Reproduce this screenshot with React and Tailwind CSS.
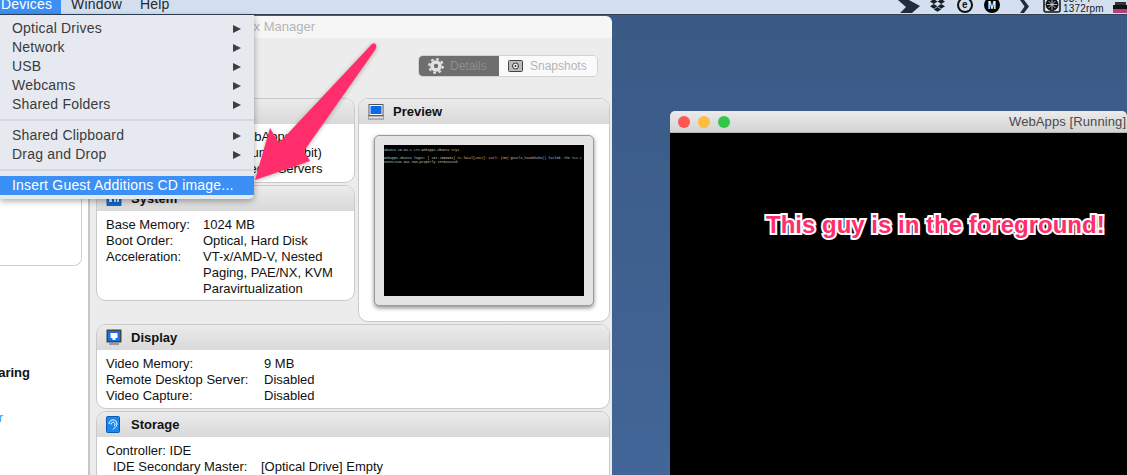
import { FaDropbox } from "react-icons/fa";

const FONT = "font-['Liberation_Sans',Arial,sans-serif]";

const menuGroups = [
  ["Optical Drives", "Network", "USB", "Webcams", "Shared Folders"],
  ["Shared Clipboard", "Drag and Drop"],
];

function MenuRow({ label }) {
  return (
    <div className="h-[19px] pl-3 pr-[13px] flex items-center justify-between text-[14px] tracking-[0.2px] text-[#3a3a3c]">
      <span>{label}</span>
      <span className="w-0 h-0 border-y-[4.5px] border-y-transparent border-l-[8px] border-l-[#3f3f42]" />
    </div>
  );
}

function DevicesMenu() {
  return (
    <div className="absolute top-[15px] left-0 w-[254px] h-[184px] pt-1 bg-[#e6eaf0] rounded-br-[5px] shadow-[0_2px_6px_rgba(0,0,0,0.35)] z-10">
      {menuGroups[0].map((m) => <MenuRow key={m} label={m} />)}
      <div className="h-[2px] bg-[#d5d8de] mt-[5px] mb-[5px]" />
      {menuGroups[1].map((m) => <MenuRow key={m} label={m} />)}
      <div className="h-[2px] bg-[#d5d8de] mt-[5px] mb-[5px]" />
      <div className="h-[19px] pl-3 flex items-center bg-[#3b8ff5] text-white text-[14px] tracking-[0.2px]">
        Insert Guest Additions CD image...
      </div>
    </div>
  );
}

function StatusIcons() {
  return (
    <div className="absolute left-0 top-0 w-full h-[15px] pointer-events-none">
      <div className="flex items-end h-[13px] pl-[898px] text-[#17202c]">
        <svg width="22" height="13" viewBox="0 0 22 13" className="shrink-0" fill="#1f2d3d">
          <path d="M0 0H11L22 6L14 13H2L8 7Z" />
        </svg>
        <FaDropbox className="ml-[10px] w-[15px] h-[15px] shrink-0" />
        <div className="ml-3 w-4 h-4 rounded-full bg-[#111] shrink-0 flex items-center justify-center">
          <span className="w-3 h-3 rounded-full bg-[#d3dfee] text-[10px] leading-3 text-center text-[#111] font-bold">e</span>
        </div>
        <div className="ml-[11px] w-4 h-4 rounded-full bg-black shrink-0 flex items-center justify-center text-white text-[10px] font-bold">M</div>
        <svg width="9" height="13" viewBox="0 0 9 13" className="ml-[20px] shrink-0" fill="#1f2d3d">
          <path d="M0 0h4l5 6.5L4 13H0l4.500-6.500z" />
        </svg>
        <svg width="18" height="17" viewBox="0 0 18 17" className="ml-[14px] shrink-0" fill="none" stroke="#111">
          <rect x="1" y="1" width="16" height="15" rx="2" strokeWidth="1.500" />
          <circle cx="9" cy="8.500" r="6" fill="#111" />
          <path d="M9 3v11M4 8.500h10M5.500 5l7 7M12.500 5l-7 7" stroke="#d3dfee" strokeWidth="0.800" />
        </svg>
        <div className="ml-[2px] w-[44px] shrink-0 text-[10px] leading-[10px] text-[#17202c] -mb-px">
          <div className="text-center pr-4">93.4°F</div>
          <div>1372rpm</div>
        </div>
        <svg width="15" height="11" viewBox="0 0 15 11" className="ml-[6px] shrink-0">
          <rect x="2" y="0" width="11" height="3" fill="#333" />
          <rect x="0" y="3" width="15" height="4" fill="#111" />
          <rect x="0" y="7" width="15" height="4" fill="#b0407e" />
        </svg>
      </div>
    </div>
  );
}

function MenuBar() {
  return (
    <div className="relative h-[15px] shrink-0 bg-[#d3dfee] border-b border-[#2f4258] text-[14px] leading-[15px] tracking-[0.2px] text-[#26282c] overflow-hidden">
      <div className="flex -mt-[3px]">
        <span className="w-[61px] h-[18px] pl-[1px] bg-[#3b8ff5] text-white">Devices</span>
        <span className="ml-[10px]">Window</span>
        <span className="ml-[18px]">Help</span>
      </div>
      <StatusIcons />
    </div>
  );
}

function MonitorIcon() {
  return (
    <svg width="16" height="16" viewBox="0 0 16 16">
      <rect x="1" y="0.500" width="14" height="11" fill="#fff" stroke="#555" />
      <rect x="2.500" y="2" width="11" height="8" fill="#0a6be8" />
      <path d="M0 12h16v3H0z" fill="#e4e4e4" stroke="#666" strokeWidth="0.800" />
    </svg>
  );
}

function DisplayIcon() {
  return (
    <svg width="16" height="17" viewBox="0 0 16 17">
      <rect x="0.500" y="0.500" width="15" height="13" fill="#444" />
      <rect x="2" y="2" width="12" height="10" fill="#1572e8" />
      <rect x="4.500" y="4" width="7" height="5" fill="#fff" />
      <rect x="6.500" y="9" width="3" height="2" fill="#fff" />
      <rect x="3" y="14" width="10" height="2" fill="#999" />
    </svg>
  );
}

function StorageIcon() {
  return (
    <svg width="14" height="17" viewBox="0 0 14 17" fill="none">
      <rect x="0.500" y="0.500" width="13" height="16" rx="1" fill="#1c86ee" stroke="#0b5cb0" />
      <path d="M3 8a4 4 0 1 1 7 2.500L7 13.500M5 8.500a2 2 0 1 1 3 1.500" stroke="#fff" />
    </svg>
  );
}

function ChipIcon() {
  return (
    <svg width="16" height="16" viewBox="0 0 16 16">
      <rect x="0.500" y="1" width="15" height="14" fill="#1464c8" />
      <path d="M3 5h3v6H3zM8 8h2v3H8zM11 6h2v5h-2z" fill="#dbe9fb" />
    </svg>
  );
}

function Row({ label, value, col }) {
  return (
    <div className="flex h-4 leading-4 whitespace-nowrap">
      <span className={col}>{label}</span>
      <span>{value}</span>
    </div>
  );
}

function Card({ icon, title, className, children }) {
  return (
    <div className={`border border-[#c9c9c9] rounded-[10px] bg-white overflow-hidden text-[13px] text-[#111] ${className}`}>
      <div className="h-[25px] flex items-center pl-[9px] gap-[9px] bg-gradient-to-b from-[#ebebeb] to-[#d9d9d9]">
        <span className="w-4 shrink-0 flex items-center">{icon}</span>
        <span className="font-bold">{title}</span>
      </div>
      {children}
    </div>
  );
}

function Toolbar() {
  return (
    <div className="flex justify-end pt-[17px] pr-[14px] text-[12px]">
      <div className="flex h-[22px] w-[180px] rounded-[5px] overflow-hidden border border-[#d2d2d2]">
        <div className="w-[81px] -m-px bg-[#6e6e6e] flex items-center pl-[10px] gap-[6px] text-[#8d8d8d]">
          <svg width="16" height="16" viewBox="0 0 16 16" className="shrink-0">
            <circle cx="8" cy="8" r="4" fill="none" stroke="#e2e2e2" strokeWidth="3.600" />
            <circle cx="8" cy="8" r="6.800" fill="none" stroke="#e2e2e2" strokeWidth="2.200" strokeDasharray="2.700 2.640" />
          </svg>
          <span>Details</span>
        </div>
        <div className="flex-1 ml-px bg-[#fafafa] flex items-center pl-[9px] gap-[7px] text-[#b4b4b8]">
          <svg width="15" height="12" viewBox="0 0 15 12" className="shrink-0">
            <rect x="0.500" y="0.500" width="14" height="11" rx="1" fill="#bbb" stroke="#444" />
            <circle cx="7.500" cy="6" r="3" fill="#eee" stroke="#333" />
            <circle cx="7.500" cy="6" r="1" fill="#333" />
          </svg>
          <span>Snapshots</span>
        </div>
      </div>
    </div>
  );
}

function PreviewBody() {
  return (
    <div className="pt-[11px] pl-[15px]">
      <div className="w-[220px] h-[171px] p-[9px] bg-[#e4e4e4] rounded-[5px] border border-[#9a9a9a] shadow-[0_2px_4px_rgba(0,0,0,0.45)]">
        <div className="h-full bg-black text-[3.300px] leading-[4px] text-[#c4c4c4] font-['Liberation_Mono',monospace] pt-[3px] overflow-hidden">
          <div className="whitespace-nowrap">Ubuntu 16.04.1 LTS webapps-ubuntu tty1</div>
          <div className="mt-[4px] whitespace-nowrap">webapps-ubuntu login: [ 157.2890981] rc-local[2327]: curl: (35) gnutls_handshake() failed: The TLS c</div>
          <div className="whitespace-nowrap">onnection was non-properly terminated.</div>
        </div>
      </div>
    </div>
  );
}

function DetailsPane() {
  return (
    <div className="flex-1 bg-[#ececec]">
      <Toolbar />
      <div className="pl-[6px] mt-[21px] flex flex-col gap-[2px]">
        <div className="flex gap-[3px]">
          <div className="w-[259px] flex flex-col gap-[2px]">
            <Card icon={<MonitorIcon />} title="General" className="h-[85px]">
              <div className="pt-[5px] pl-[9px]">
                <Row col="w-[129px]" label="Name:" value="WebApps" />
                <Row col="w-[129px]" label="Operating System:" value="Ubuntu (64-bit)" />
                <Row col="w-[129px]" label="Groups:" value="/Media Servers" />
              </div>
            </Card>
            <Card icon={<ChipIcon />} title="System" className="h-[116px]">
              <div className="pt-[6px] pl-[9px]">
                <Row col="w-[97px]" label="Base Memory:" value="1024 MB" />
                <Row col="w-[97px]" label="Boot Order:" value="Optical, Hard Disk" />
                <Row col="w-[97px]" label="Acceleration:" value="VT-x/AMD-V, Nested" />
                <Row col="w-[97px]" value="Paging, PAE/NX, KVM" />
                <Row col="w-[97px]" value="Paravirtualization" />
              </div>
            </Card>
          </div>
          <Card icon={<MonitorIcon />} title="Preview" className="w-[252px] h-[224px]">
            <PreviewBody />
          </Card>
        </div>
        <Card icon={<DisplayIcon />} title="Display" className="w-[514px] h-[85px]">
          <div className="pt-[6px] pl-[9px]">
            <Row col="w-[158px]" label="Video Memory:" value="9 MB" />
            <Row col="w-[158px]" label="Remote Desktop Server:" value="Disabled" />
            <Row col="w-[158px]" label="Video Capture:" value="Disabled" />
          </div>
        </Card>
        <Card icon={<StorageIcon />} title="Storage" className="w-[514px] h-[90px] rounded-b-none">
          <div className="pt-[6px] pl-[9px]">
            <Row label="Controller: IDE" />
            <Row col="w-[155px] pl-[7px]" label="IDE Secondary Master:" value="[Optical Drive] Empty" />
          </div>
        </Card>
      </div>
    </div>
  );
}

function ManagerWindow() {
  return (
    <div className="w-[612px] shrink-0 mt-px flex flex-col rounded-tr-[6px] overflow-hidden">
      <div className="h-[22px] shrink-0 bg-[#f6f6f6] flex justify-end items-center pr-[297px] text-[13px] text-[#b5b5b5]">
        Oracle VM VirtualBox Manager
      </div>
      <div className="flex-1 flex min-h-0">
        <div className="w-[90px] shrink-0 bg-white border-r-2 border-[#c6c6c6] overflow-hidden text-[13px]">
          <div className="w-[82px] h-[228px] bg-white border-r border-b border-[#cfcfcf] rounded-br-[8px]" />
          <div className="mt-[99px] w-[30px] flex justify-end leading-4 font-bold text-[#111] whitespace-nowrap">Sharing</div>
          <div className="mt-[29px] w-[3px] flex justify-end leading-4 text-[#3aa0f0] whitespace-nowrap">Server</div>
        </div>
        <DetailsPane />
      </div>
    </div>
  );
}

function VmWindow() {
  return (
    <div className="flex-1 ml-[58px] mt-[96px] flex flex-col rounded-t-[5px] overflow-hidden">
      <div className="h-[22px] shrink-0 bg-gradient-to-b from-[#ebebeb] to-[#d3d3d3] border-b border-[#b1b1b1] flex items-center pl-[8px] gap-2 text-[13px] text-[#4a4a4a]">
        <span className="w-3 h-3 shrink-0 rounded-full bg-[#fc5753]" />
        <span className="w-3 h-3 shrink-0 rounded-full bg-[#fdbc40]" />
        <span className="w-3 h-3 shrink-0 rounded-full bg-[#33c748]" />
        <span className="ml-[271px] whitespace-nowrap tracking-[0.1px]">WebApps [Running]</span>
      </div>
      <div className="flex-1 bg-black pt-[78px] pl-[96px]">
        <p className="text-[24px] leading-7 font-bold text-[#ff2d6c] whitespace-nowrap [-webkit-text-stroke:4px_white] [paint-order:stroke_fill]">
          This guy is in the foreground!
        </p>
      </div>
    </div>
  );
}

function PinkArrow() {
  return (
    <svg width="1127" height="475" viewBox="0 0 1127 475" className="absolute left-0 top-0 pointer-events-none z-20 drop-shadow-[0_1px_2px_rgba(0,0,0,0.3)]">
      <path
        d="M372 44 Q375 42 376 45 Q377 47 375 50 L304 151 L310 161 L255 180 L270 128 L279 143 Z"
        fill="#ff2d6c"
      />
    </svg>
  );
}

export default function App() {
  return (
    <div className={`relative h-[475px] overflow-hidden flex flex-col bg-gradient-to-b from-[#3a5a85] to-[#426698] ${FONT}`}>
      <MenuBar />
      <div className="flex-1 flex min-h-0">
        <ManagerWindow />
        <VmWindow />
      </div>
      <DevicesMenu />
      <PinkArrow />
    </div>
  );
}
